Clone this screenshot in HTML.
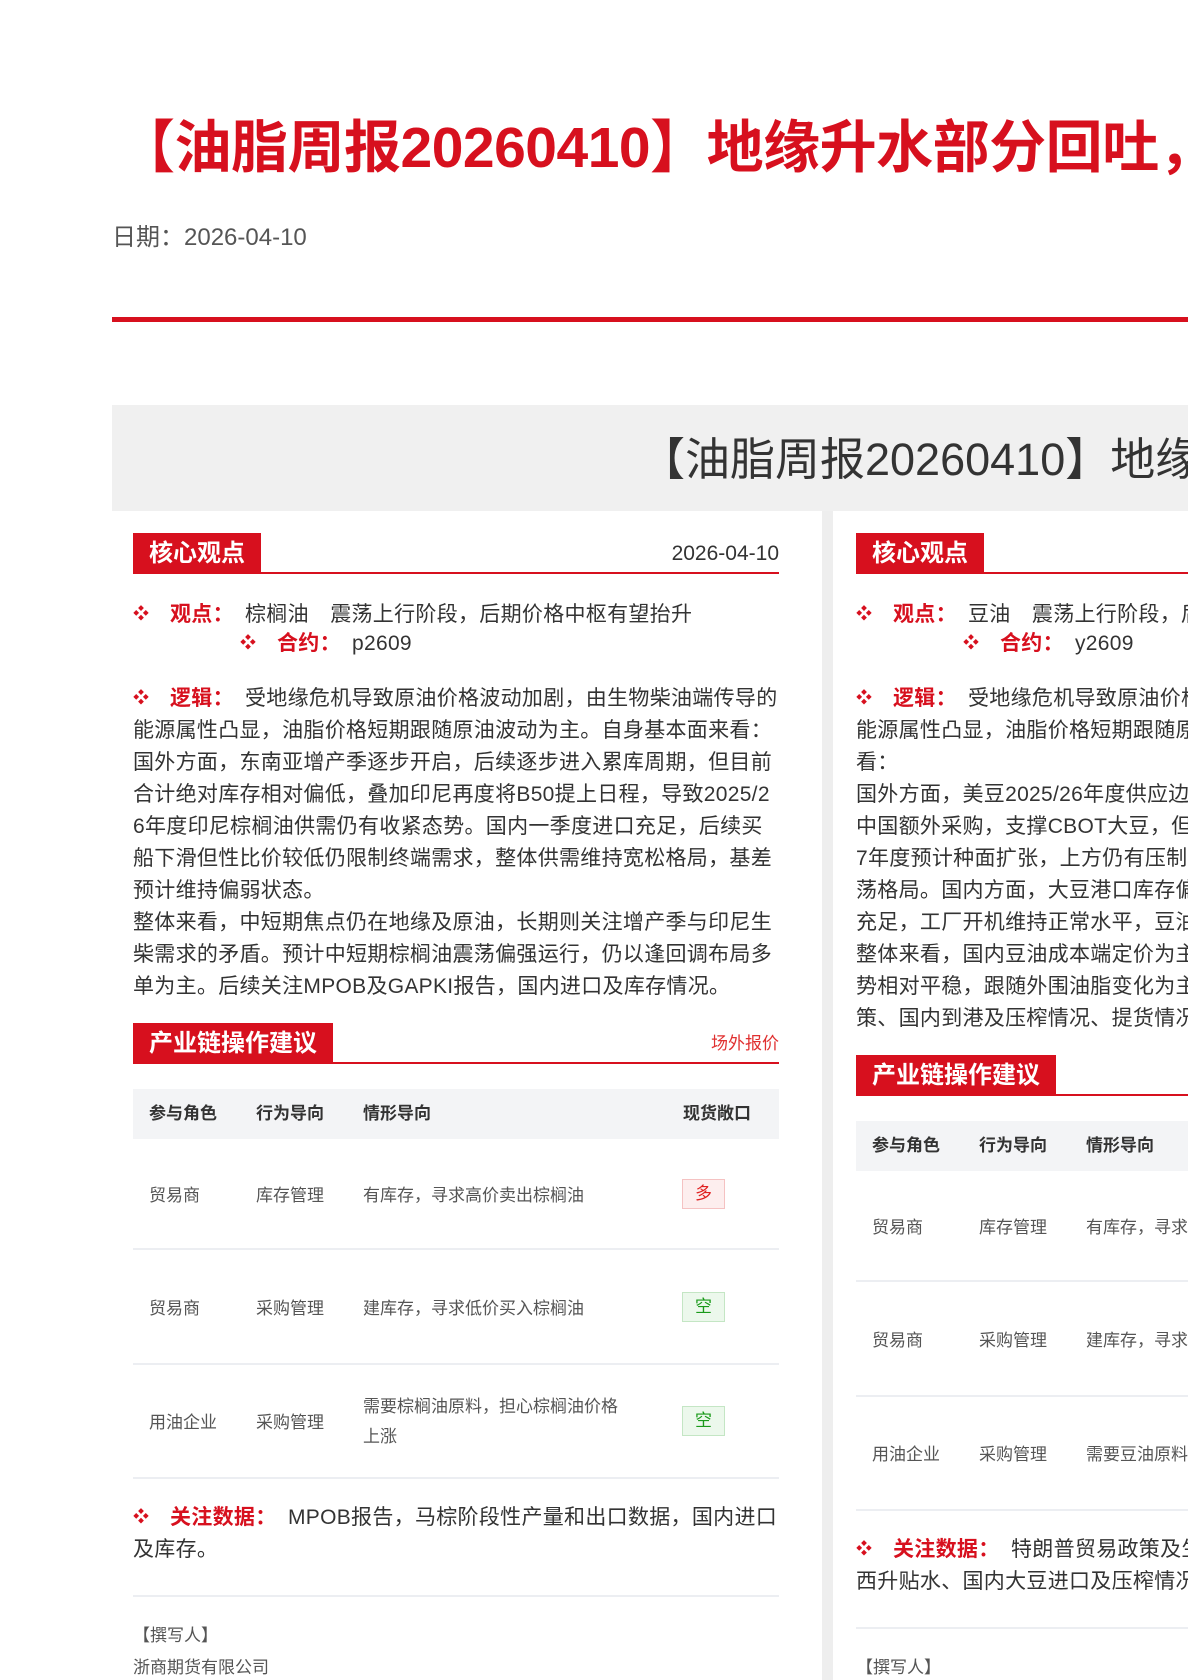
<!DOCTYPE html>
<html><head><meta charset="utf-8"><style>
*{margin:0;padding:0;box-sizing:border-box}
html,body{width:1188px;height:1680px;overflow:hidden;background:#fff}
body{position:relative;font-family:"Liberation Sans","Noto Sans CJK SC",sans-serif;color:#333}
.a{position:absolute;white-space:nowrap}
.title{left:118px;top:113px;font-size:57px;font-weight:bold;color:#d7101e;line-height:70px;letter-spacing:-0.5px}
.date{left:112px;top:223px;font-size:24px;color:#555;line-height:30px}
.rl{left:112px;top:317px;width:1076px;height:5px;background:#d7101e}
.gb{left:112px;top:405px;width:1076px;height:106px;background:#f0f0f0}
.gt{left:640px;top:432px;font-size:45px;color:#333;line-height:56px}
.gap{left:822px;top:511px;width:11px;height:1169px;background:#eee}
.badge{background:#d7101e;color:#fff;font-size:24px;font-weight:bold;line-height:41px;padding-left:16px}
.uline{height:2px;background:#d7101e}
.t{font-size:21px;line-height:32px;color:#333;letter-spacing:0.3px}
.b{color:#d7101e;font-size:16px;font-weight:bold}
.lb{color:#d7101e;font-weight:bold}
.th{background:#f3f4f6;height:50px}
.hd{font-size:17px;font-weight:bold;color:#333;line-height:20px}
.td{font-size:17px;color:#555;line-height:20px}
.sep{height:2px;background:#eceef2}
.tag{width:43px;height:30px;font-size:17px;line-height:28px;text-align:center}
.red{background:#fdeeee;border:1px solid #f5c2c2;color:#e02020}
.grn{background:#ecf8ec;border:1px solid #c4e6c4;color:#1a9a1a}
.sm{font-size:17px;color:#555;line-height:20px}
</style></head><body>
<div class="a title">【油脂周报20260410】地缘升水部分回吐，油脂震荡上行</div>
<div class="a date">日期：2026-04-10</div>
<div class="a rl"></div>
<div class="a gb"></div>
<div class="a gt">【油脂周报20260410】地缘升水部分回吐，油脂震荡上行</div>
<div class="a gap"></div>

<!-- LEFT -->
<div class="a badge" style="left:133px;top:533px;width:128px;">核心观点</div>
<div class="a uline" style="left:133px;top:572px;width:646px"></div>
<div class="a" style="right:409px;top:540px;font-size:21px;line-height:28px;color:#333">2026-04-10</div>
<div class="a t" style="left:133px;top:597px"><span class="b">❖</span></div>
<div class="a t" style="left:170px;top:599px"><span class="lb">观点：</span></div>
<div class="a t" style="left:245px;top:599px">棕榈油　震荡上行阶段，后期价格中枢有望抬升</div>
<div class="a t" style="left:240px;top:626px"><span class="b">❖</span></div>
<div class="a t" style="left:277px;top:628px"><span class="lb">合约：</span></div>
<div class="a t" style="left:352px;top:628px">p2609</div>
<div class="a t" style="left:133px;top:681px"><span class="b">❖</span></div>
<div class="a t" style="left:170px;top:683px"><span class="lb">逻辑：</span></div>
<div class="a t" style="left:245px;top:683px">受地缘危机导致原油价格波动加剧，由生物柴油端传导的</div>
<div class="a t" style="left:133px;top:715px">能源属性凸显，油脂价格短期跟随原油波动为主。自身基本面来看：</div>
<div class="a t" style="left:133px;top:747px">国外方面，东南亚增产季逐步开启，后续逐步进入累库周期，但目前</div>
<div class="a t" style="left:133px;top:779px">合计绝对库存相对偏低，叠加印尼再度将B50提上日程，导致2025/2</div>
<div class="a t" style="left:133px;top:811px">6年度印尼棕榈油供需仍有收紧态势。国内一季度进口充足，后续买</div>
<div class="a t" style="left:133px;top:843px">船下滑但性比价较低仍限制终端需求，整体供需维持宽松格局，基差</div>
<div class="a t" style="left:133px;top:875px">预计维持偏弱状态。</div>
<div class="a t" style="left:133px;top:907px">整体来看，中短期焦点仍在地缘及原油，长期则关注增产季与印尼生</div>
<div class="a t" style="left:133px;top:939px">柴需求的矛盾。预计中短期棕榈油震荡偏强运行，仍以逢回调布局多</div>
<div class="a t" style="left:133px;top:971px">单为主。后续关注MPOB及GAPKI报告，国内进口及库存情况。</div>

<div class="a badge" style="left:133px;top:1023px;width:200px;">产业链操作建议</div>
<div class="a uline" style="left:133px;top:1062px;width:646px"></div>
<div class="a" style="right:409px;top:1033px;font-size:17px;color:#e03030;line-height:22px">场外报价</div>
<div class="a th" style="left:133px;top:1089px;width:646px"></div>
<div class="a hd" style="left:149px;top:1104px">参与角色</div>
<div class="a hd" style="left:256px;top:1104px">行为导向</div>
<div class="a hd" style="left:363px;top:1104px">情形导向</div>
<div class="a hd" style="left:683px;top:1104px">现货敞口</div>
<div class="a td" style="left:149px;top:1186px">贸易商</div>
<div class="a td" style="left:256px;top:1186px">库存管理</div>
<div class="a td" style="left:363px;top:1186px">有库存，寻求高价卖出棕榈油</div>
<div class="a tag red" style="left:682px;top:1179px">多</div>
<div class="a sep" style="left:133px;top:1248px;width:646px"></div>
<div class="a td" style="left:149px;top:1299px">贸易商</div>
<div class="a td" style="left:256px;top:1299px">采购管理</div>
<div class="a td" style="left:363px;top:1299px">建库存，寻求低价买入棕榈油</div>
<div class="a tag grn" style="left:682px;top:1292px">空</div>
<div class="a sep" style="left:133px;top:1363px;width:646px"></div>
<div class="a td" style="left:149px;top:1413px">用油企业</div>
<div class="a td" style="left:256px;top:1413px">采购管理</div>
<div class="a td" style="left:363px;top:1397px">需要棕榈油原料，担心棕榈油价格</div>
<div class="a td" style="left:363px;top:1427px">上涨</div>
<div class="a tag grn" style="left:682px;top:1406px">空</div>
<div class="a sep" style="left:133px;top:1477px;width:646px"></div>
<div class="a t" style="left:133px;top:1500px"><span class="b">❖</span></div>
<div class="a t" style="left:170px;top:1502px"><span class="lb">关注数据：</span></div>
<div class="a t" style="left:288px;top:1502px">MPOB报告，马棕阶段性产量和出口数据，国内进口</div>
<div class="a t" style="left:133px;top:1534px">及库存。</div>
<div class="a sep" style="left:133px;top:1595px;width:646px"></div>
<div class="a sm" style="left:133px;top:1626px">【撰写人】</div>
<div class="a sm" style="left:133px;top:1658px">浙商期货有限公司</div>

<!-- RIGHT -->
<div class="a badge" style="left:856px;top:533px;width:128px;">核心观点</div>
<div class="a uline" style="left:856px;top:572px;width:332px"></div>
<div class="a t" style="left:856px;top:597px"><span class="b">❖</span></div>
<div class="a t" style="left:893px;top:599px"><span class="lb">观点：</span></div>
<div class="a t" style="left:968px;top:599px">豆油　震荡上行阶段，后期价格中枢有望抬升</div>
<div class="a t" style="left:963px;top:626px"><span class="b">❖</span></div>
<div class="a t" style="left:1000px;top:628px"><span class="lb">合约：</span></div>
<div class="a t" style="left:1075px;top:628px">y2609</div>
<div class="a t" style="left:856px;top:681px"><span class="b">❖</span></div>
<div class="a t" style="left:893px;top:683px"><span class="lb">逻辑：</span></div>
<div class="a t" style="left:968px;top:683px">受地缘危机导致原油价格波动加剧</div>
<div class="a t" style="left:856px;top:715px">能源属性凸显，油脂价格短期跟随原油波动为主</div>
<div class="a t" style="left:856px;top:747px">看：</div>
<div class="a t" style="left:856px;top:779px">国外方面，美豆2025/26年度供应边际</div>
<div class="a t" style="left:856px;top:811px">中国额外采购，支撑CBOT大豆，但</div>
<div class="a t" style="left:856px;top:843px">7年度预计种面扩张，上方仍有压制</div>
<div class="a t" style="left:856px;top:875px">荡格局。国内方面，大豆港口库存偏</div>
<div class="a t" style="left:856px;top:907px">充足，工厂开机维持正常水平，豆油</div>
<div class="a t" style="left:856px;top:939px">整体来看，国内豆油成本端定价为主</div>
<div class="a t" style="left:856px;top:971px">势相对平稳，跟随外围油脂变化为主</div>
<div class="a t" style="left:856px;top:1003px">策、国内到港及压榨情况、提货情况</div>

<div class="a badge" style="left:856px;top:1055px;width:200px;">产业链操作建议</div>
<div class="a uline" style="left:856px;top:1094px;width:332px"></div>
<div class="a th" style="left:856px;top:1121px;width:332px"></div>
<div class="a hd" style="left:872px;top:1136px">参与角色</div>
<div class="a hd" style="left:979px;top:1136px">行为导向</div>
<div class="a hd" style="left:1086px;top:1136px">情形导向</div>
<div class="a td" style="left:872px;top:1218px">贸易商</div>
<div class="a td" style="left:979px;top:1218px">库存管理</div>
<div class="a td" style="left:1086px;top:1218px">有库存，寻求高价卖出豆油</div>
<div class="a sep" style="left:856px;top:1280px;width:332px"></div>
<div class="a td" style="left:872px;top:1331px">贸易商</div>
<div class="a td" style="left:979px;top:1331px">采购管理</div>
<div class="a td" style="left:1086px;top:1331px">建库存，寻求低价买入豆油</div>
<div class="a sep" style="left:856px;top:1395px;width:332px"></div>
<div class="a td" style="left:872px;top:1445px">用油企业</div>
<div class="a td" style="left:979px;top:1445px">采购管理</div>
<div class="a td" style="left:1086px;top:1445px">需要豆油原料，担心豆油价格上涨</div>
<div class="a sep" style="left:856px;top:1509px;width:332px"></div>
<div class="a t" style="left:856px;top:1532px"><span class="b">❖</span></div>
<div class="a t" style="left:893px;top:1534px"><span class="lb">关注数据：</span></div>
<div class="a t" style="left:1011px;top:1534px">特朗普贸易政策及生物柴油政策、巴</div>
<div class="a t" style="left:856px;top:1566px">西升贴水、国内大豆进口及压榨情况。</div>
<div class="a sep" style="left:856px;top:1627px;width:332px"></div>
<div class="a sm" style="left:856px;top:1658px">【撰写人】</div>
</body></html>
